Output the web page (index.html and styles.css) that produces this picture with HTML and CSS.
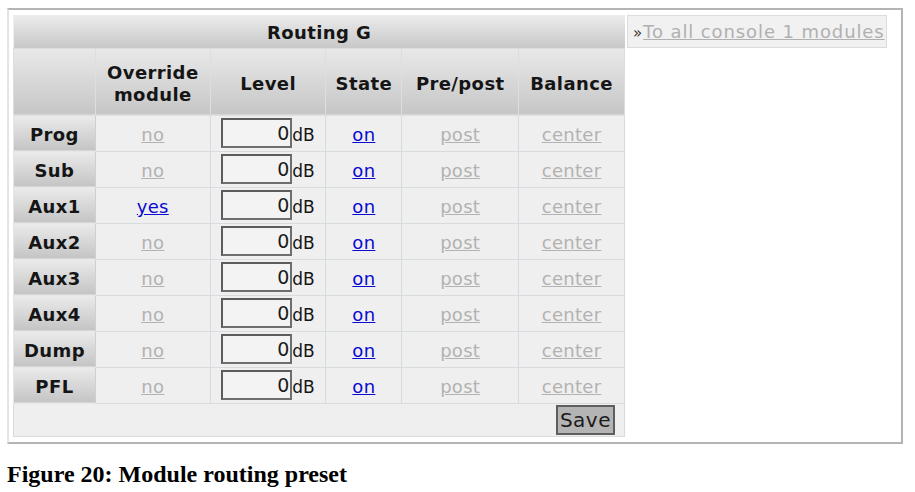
FILE: index.html
```html
<!DOCTYPE html>
<html lang="en">
<head>
  <meta charset="UTF-8" />
  <title>Module routing preset</title>
  <link rel="stylesheet" href="styles.css">
</head>
<body>

  <div class="frame">
    <table class="routing">
      <tr>
        <th class="title" colspan="6">Routing G</th>
      </tr>
      <tr class="head">
        <th></th>
        <th>Override<br>module</th>
        <th>Level</th>
        <th>State</th>
        <th>Pre/post</th>
        <th>Balance</th>
      </tr>
      <tr>
        <th class="label">Prog</th>
        <td><a class="off" href="#">no</a></td>
        <td><input class="level" type="text" value="0"><span class="unit">dB</span></td>
        <td><a class="on" href="#">on</a></td>
        <td><a class="off" href="#">post</a></td>
        <td><a class="off" href="#">center</a></td>
      </tr>
      <tr>
        <th class="label">Sub</th>
        <td><a class="off" href="#">no</a></td>
        <td><input class="level" type="text" value="0"><span class="unit">dB</span></td>
        <td><a class="on" href="#">on</a></td>
        <td><a class="off" href="#">post</a></td>
        <td><a class="off" href="#">center</a></td>
      </tr>
      <tr>
        <th class="label">Aux1</th>
        <td><a class="on" href="#">yes</a></td>
        <td><input class="level" type="text" value="0"><span class="unit">dB</span></td>
        <td><a class="on" href="#">on</a></td>
        <td><a class="off" href="#">post</a></td>
        <td><a class="off" href="#">center</a></td>
      </tr>
      <tr>
        <th class="label">Aux2</th>
        <td><a class="off" href="#">no</a></td>
        <td><input class="level" type="text" value="0"><span class="unit">dB</span></td>
        <td><a class="on" href="#">on</a></td>
        <td><a class="off" href="#">post</a></td>
        <td><a class="off" href="#">center</a></td>
      </tr>
      <tr>
        <th class="label">Aux3</th>
        <td><a class="off" href="#">no</a></td>
        <td><input class="level" type="text" value="0"><span class="unit">dB</span></td>
        <td><a class="on" href="#">on</a></td>
        <td><a class="off" href="#">post</a></td>
        <td><a class="off" href="#">center</a></td>
      </tr>
      <tr>
        <th class="label">Aux4</th>
        <td><a class="off" href="#">no</a></td>
        <td><input class="level" type="text" value="0"><span class="unit">dB</span></td>
        <td><a class="on" href="#">on</a></td>
        <td><a class="off" href="#">post</a></td>
        <td><a class="off" href="#">center</a></td>
      </tr>
      <tr>
        <th class="label">Dump</th>
        <td><a class="off" href="#">no</a></td>
        <td><input class="level" type="text" value="0"><span class="unit">dB</span></td>
        <td><a class="on" href="#">on</a></td>
        <td><a class="off" href="#">post</a></td>
        <td><a class="off" href="#">center</a></td>
      </tr>
      <tr>
        <th class="label">PFL</th>
        <td><a class="off" href="#">no</a></td>
        <td><input class="level" type="text" value="0"><span class="unit">dB</span></td>
        <td><a class="on" href="#">on</a></td>
        <td><a class="off" href="#">post</a></td>
        <td><a class="off" href="#">center</a></td>
      </tr>
      <tr>
        <td class="save-row" colspan="6"><button class="save">Save</button></td>
      </tr>
    </table>

    <div class="side">
      <div class="all-link"><span class="arrow">&raquo;</span><a href="#">To all console 1 modules</a></div>
    </div>
  </div>

  <p class="caption">Figure 20: Module routing preset</p>

</body>
</html>
```

FILE: styles.css
```css
* {
  margin: 0;
  padding: 0;
  box-sizing: border-box;
}

html, body {
  background: #fff;
  width: 915px;
  height: 492px;
  overflow: hidden;
}

.frame {
  display: flex;
  align-items: flex-start;
  margin: 8px 0 0 7px;
  width: 896px;
  height: 436px;
  border: 2px solid #b4b4b4;
  border-left-color: #e4e4e4;
  padding: 5px 0 0 4px;
  font-family: "DejaVu Sans", Verdana, sans-serif;
  font-size: 18px;
  color: #151515;
}

.routing {
  border-collapse: collapse;
  width: 612px;
  background: #efefef;
}

.routing th,
.routing td {
  text-align: center;
  vertical-align: middle;
  border: 1px solid #d6dbdf;
  padding-top: 3px;
}

.routing .title {
  height: 33px;
  border: none;
  border-bottom: 1px solid #dcdcdc;
  background: linear-gradient(#ececec, #c8c8c8);
  font-weight: bold;
  letter-spacing: 0.4px;
}

.head th {
  height: 67px;
  line-height: 22px;
  padding-top: 5px;
  border: 1px solid #dedede;
  border-top: none;
  background: linear-gradient(#e9e9e9, #c6c6c6);
  font-weight: bold;
  letter-spacing: 0.4px;
}

.head th:nth-child(1) { width: 82px; }
.head th:nth-child(2) { width: 115px; }
.head th:nth-child(3) { width: 116px; }
.head th:nth-child(4) { width: 76px; }
.head th:nth-child(5) { width: 117px; }
.head th:nth-child(6) { width: 106px; }

.routing .label {
  height: 36px;
  border: 1px solid #e6e6e6;
  border-right-color: #cfcfcf;
  background: linear-gradient(#ebebeb, #c4c4c4);
  font-weight: bold;
  letter-spacing: 0.4px;
}

.routing a {
  text-decoration: underline;
  letter-spacing: 0.3px;
}

.routing a.off {
  color: #b2b2b2;
}

.routing a.on {
  color: #0a0ad0;
}

.level {
  width: 71px;
  height: 30px;
  margin-top: -3px;
  vertical-align: middle;
  border: 2px solid #5c5c5c;
  border-right-color: #6e6e6e;
  border-bottom-color: #6e6e6e;
  background: #f3f3f3;
  font-family: "DejaVu Sans", Verdana, sans-serif;
  font-size: 19px;
  color: #1a1a1a;
  text-align: right;
  padding: 0 1px 0 2px;
}

.unit {
  vertical-align: middle;
  font-size: 17px;
}

.routing .save-row {
  height: 33px;
  text-align: right;
  padding: 0 9px 0 0;
  border: 1px solid #d6dbdf;
}

.save {
  height: 30px;
  padding: 0 2px;
  border: 2px solid #5e5e5e;
  background: #b4b4b4;
  font-family: "DejaVu Sans", Verdana, sans-serif;
  font-size: 20px;
  letter-spacing: 0.5px;
  color: #1a1a1a;
  vertical-align: middle;
}

.side {
  padding-left: 2px;
}

.all-link {
  width: 260px;
  height: 33px;
  line-height: 31px;
  padding-left: 5px;
  background: #f1f1f1;
  border: 1px solid #dcdcdc;
  font-size: 18px;
  letter-spacing: 0.9px;
  white-space: nowrap;
  overflow: hidden;
}

.all-link .arrow {
  color: #333;
  font-size: 15px;
}

.all-link a {
  color: #b0b0b0;
  text-decoration: underline;
}

.caption {
  margin: 17px 0 0 7px;
  font-family: "Liberation Serif", "Times New Roman", serif;
  font-weight: bold;
  font-size: 24px;
  color: #000;
}
```
